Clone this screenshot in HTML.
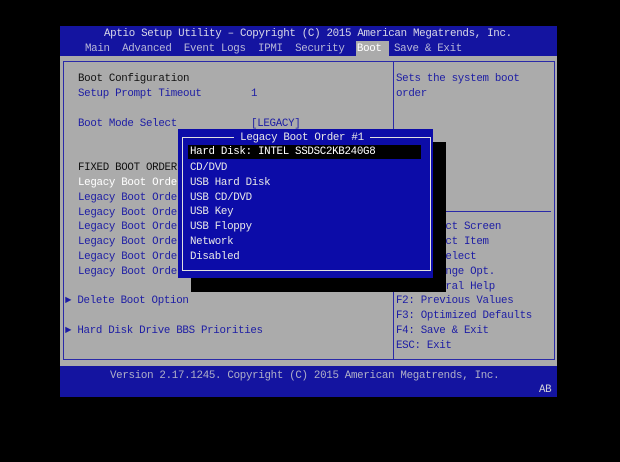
<!DOCTYPE html><html><head><style>
body{margin:0;width:620px;height:462px;background:#000;position:relative;overflow:hidden;font-family:"Liberation Mono",monospace;font-size:10.8px;letter-spacing:-0.3px;}
div{position:absolute;white-space:pre;}
.t{line-height:13px;}
.b{color:#1c1ca4}.w{color:#fff}.k{color:#111}.m{color:#b8b8d8}
</style></head><body>
<div style="left:60px;top:26px;width:497px;height:30px;background:#1414a0"></div>
<div style="left:60px;top:56px;width:497px;height:310px;background:#ababab"></div>
<div style="left:60px;top:366px;width:497px;height:31px;background:#1414a0"></div>
<div style="left:63px;top:61px;width:329px;height:297px;border:1px solid #2a2aa8"></div>
<div style="left:392px;top:61px;width:162px;height:297px;border:1px solid #2a2aa8;border-left:none"></div>
<div style="left:396px;top:211px;width:155px;height:1px;background:#2a2aa8"></div>
<div style="left:356px;top:41px;width:33px;height:15px;background:#ababab"></div>
<div class="t" style="left:104px;top:28px;color:#d8d8e8">Aptio Setup Utility – Copyright (C) 2015 American Megatrends, Inc.</div>
<div class="t m" style="left:85px;top:43px">Main  Advanced  Event Logs  IPMI  Security  <span style="color:#fff">Boot</span>  Save &amp; Exit</div>
<div class="t k" style="left:78px;top:73px">Boot Configuration</div>
<div class="t b" style="left:78px;top:88px">Setup Prompt Timeout        1</div>
<div class="t b" style="left:78px;top:118px">Boot Mode Select            [LEGACY]</div>
<div class="t k" style="left:78px;top:162px">FIXED BOOT ORDER Priorities</div>
<div class="t w" style="left:78px;top:177px">Legacy Boot Order #1</div>
<div class="t b" style="left:78px;top:192px">Legacy Boot Order #2</div>
<div class="t b" style="left:78px;top:207px">Legacy Boot Order #3</div>
<div class="t b" style="left:78px;top:221px">Legacy Boot Order #4</div>
<div class="t b" style="left:78px;top:236px">Legacy Boot Order #5</div>
<div class="t b" style="left:78px;top:251px">Legacy Boot Order #6</div>
<div class="t b" style="left:78px;top:266px">Legacy Boot Order #7</div>
<div class="t b" style="left:65px;top:295px">► Delete Boot Option</div>
<div class="t b" style="left:65px;top:325px">► Hard Disk Drive BBS Priorities</div>
<div class="t b" style="left:396px;top:73px">Sets the system boot</div>
<div class="t b" style="left:396px;top:88px">order</div>
<div class="t b" style="left:396px;top:221px">→←: Select Screen</div>
<div class="t b" style="left:396px;top:236px">↑↓: Select Item</div>
<div class="t b" style="left:396px;top:251px">Enter: Select</div>
<div class="t b" style="left:396px;top:266px">+/-: Change Opt.</div>
<div class="t b" style="left:396px;top:281px">F1: General Help</div>
<div class="t b" style="left:396px;top:295px">F2: Previous Values</div>
<div class="t b" style="left:396px;top:310px">F3: Optimized Defaults</div>
<div class="t b" style="left:396px;top:325px">F4: Save &amp; Exit</div>
<div class="t b" style="left:396px;top:340px">ESC: Exit</div>
<div class="t" style="left:110px;top:370px;color:#b0b0c8">Version 2.17.1245. Copyright (C) 2015 American Megatrends, Inc.</div>
<div class="t" style="left:539px;top:384px;color:#d0d0d8">AB</div>
<div style="left:191px;top:142px;width:255px;height:150px;background:#000"></div>
<div style="left:178px;top:129px;width:255px;height:149px;background:#0c0ca8"></div>
<div style="left:182px;top:137px;width:247px;height:132px;border:1px solid #e0e0e0"></div>
<div class="t" style="left:234px;top:132px;background:#0c0ca8;color:#e8e8e8"> Legacy Boot Order #1 </div>
<div style="left:188px;top:145px;width:233px;height:14px;background:#000"></div>
<div class="t" style="left:190px;top:146px;color:#fff">Hard Disk: INTEL SSDSC2KB240G8</div>
<div class="t" style="left:190px;top:161px;color:#e8e8e8;line-height:14.8px">CD/DVD
USB Hard Disk
USB CD/DVD
USB Key
USB Floppy
Network
Disabled</div>
</body></html>
